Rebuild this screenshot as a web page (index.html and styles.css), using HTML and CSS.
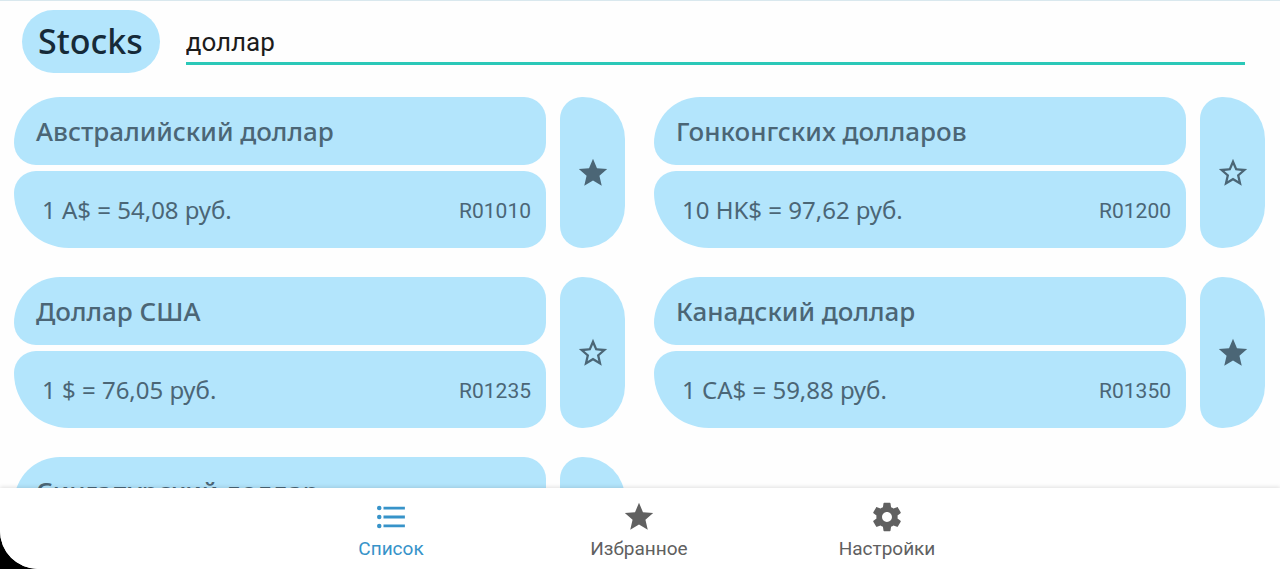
FILE: index.html
```html
<!DOCTYPE html>
<html lang="ru">
<head>
<meta charset="utf-8">
<meta name="viewport" content="width=device-width, initial-scale=1">
<title>Stocks</title>
<link rel="stylesheet" href="styles.css">
</head>
<body>
<svg class="sprite" aria-hidden="true">
  <symbol id="star" viewBox="0 0 24 24"><path d="M12 17.27L18.18 21l-1.64-7.03L22 9.24l-7.19-.61L12 2 9.19 8.63 2 9.24l5.46 4.73L5.82 21z"/></symbol>
  <symbol id="star-outline" viewBox="0 0 24 24"><path d="M22 9.24l-7.19-.62L12 2 9.19 8.63 2 9.24l5.46 4.73L5.82 21 12 17.27 18.18 21l-1.63-7.03L22 9.24zM12 15.4l-3.76 2.27 1-4.28-3.32-2.88 4.38-.38L12 6.1l1.71 4.04 4.38.38-3.32 2.88 1 4.28L12 15.4z"/></symbol>
  <symbol id="list" viewBox="0 0 24 24"><circle cx="3.7" cy="5.7" r="1.6"/><circle cx="3.7" cy="12" r="1.6"/><circle cx="3.7" cy="18.3" r="1.6"/><path d="M6.7 4.7H21.8V6.7H6.7zM6.7 11H21.8V13H6.7zM6.7 17.3H21.8V19.3H6.7z"/></symbol>
  <symbol id="gear" viewBox="0 0 24 24"><path d="M19.43 12.98c.04-.32.07-.64.07-.98s-.03-.66-.07-.98l2.11-1.65c.19-.15.24-.42.12-.64l-2-3.46c-.12-.22-.39-.3-.61-.22l-2.49 1c-.52-.4-1.08-.73-1.69-.98l-.38-2.65C14.46 2.18 14.25 2 14 2h-4c-.25 0-.46.18-.49.42l-.38 2.65c-.61.25-1.17.59-1.69.98l-2.49-1c-.23-.09-.49 0-.61.22l-2 3.46c-.13.22-.07.49.12.64l2.11 1.65c-.04.32-.07.65-.07.98s.03.66.07.98l-2.11 1.65c-.19.15-.24.42-.12.64l2 3.46c.12.22.39.3.61.22l2.49-1c.52.4 1.08.73 1.69.98l.38 2.65c.03.24.24.42.49.42h4c.25 0 .46-.18.49-.42l.38-2.65c.61-.25 1.17-.59 1.69-.98l2.49 1c.23.09.49 0 .61-.22l2-3.46c.12-.22.07-.49-.12-.64l-2.11-1.65zM12 15.5c-1.93 0-3.5-1.57-3.5-3.5s1.57-3.5 3.5-3.5 3.5 1.57 3.5 3.5-1.57 3.5-3.5 3.5z"/></symbol>
</svg>
<div class="app">
  <header class="header">
    <h1 class="brand">Stocks</h1>
    <input class="search" type="text" value="доллар" aria-label="Поиск">
  </header>
  <main class="list">
    <article class="stock">
      <h2 class="name">Австралийский доллар</h2>
      <div class="details"><span class="rate">1 A$ = 54,08 руб.</span><span class="code">R01010</span></div>
      <button class="favorite" type="button" aria-label="Убрать из избранного"><svg class="icon"><use href="#star"/></svg></button>
    </article>
    <article class="stock">
      <h2 class="name">Гонконгских долларов</h2>
      <div class="details"><span class="rate">10 HK$ = 97,62 руб.</span><span class="code">R01200</span></div>
      <button class="favorite" type="button" aria-label="Добавить в избранное"><svg class="icon"><use href="#star-outline"/></svg></button>
    </article>
    <article class="stock">
      <h2 class="name">Доллар США</h2>
      <div class="details"><span class="rate">1 $ = 76,05 руб.</span><span class="code">R01235</span></div>
      <button class="favorite" type="button" aria-label="Добавить в избранное"><svg class="icon"><use href="#star-outline"/></svg></button>
    </article>
    <article class="stock">
      <h2 class="name">Канадский доллар</h2>
      <div class="details"><span class="rate">1 CA$ = 59,88 руб.</span><span class="code">R01350</span></div>
      <button class="favorite" type="button" aria-label="Убрать из избранного"><svg class="icon"><use href="#star"/></svg></button>
    </article>
    <article class="stock">
      <h2 class="name">Сингапурский доллар</h2>
      <div class="details"></div>
      <button class="favorite" type="button" aria-label="Добавить в избранное"></button>
    </article>
  </main>
  <nav class="nav">
    <a class="tab tab-active" href="#list" aria-current="page"><svg class="icon"><use href="#list"/></svg>Список</a>
    <a class="tab" href="#favorites"><svg class="icon"><use href="#star"/></svg>Избранное</a>
    <a class="tab" href="#settings"><svg class="icon"><use href="#gear"/></svg>Настройки</a>
  </nav>
</div>
</body>
</html>
```
FILE: styles.css
```css
* { box-sizing: border-box; }

body {
  margin: 0;
  background: #000;
  font-family: Roboto, "Liberation Sans", sans-serif;
}

.sprite { display: none; }

.app {
  display: flex;
  flex-direction: column;
  height: 100vh;
  overflow: hidden;
  background: #fefefe;
  border-top: 1px solid #d9e8ee;
  border-bottom-left-radius: 38px;
}

.header {
  display: flex;
  flex: none;
  align-items: center;
  gap: 26px;
  padding: 9px 35px 0 22px;
}

.brand {
  margin: 0;
  padding: 0 17px 0 16px;
  border-radius: 32px;
  background: #b3e5fc;
  color: #162a38;
  font: 500 34px/63px "Noto Sans", sans-serif;
}

.search {
  flex: 1;
  min-width: 0;
  height: 44px;
  margin-top: 2px;
  padding: 2px 0 0;
  border: 0;
  border-bottom: 3px solid #2bc8b8;
  outline: 0;
  background: transparent;
  color: #1c1c1c;
  font: 400 26px/38px Roboto, sans-serif;
}

.list {
  display: grid;
  flex: 1;
  grid-template-columns: 1fr 1fr;
  align-content: start;
  gap: 29px;
  min-height: 0;
  padding: 24px 15px 0 14px;
  overflow: hidden;
}

.stock {
  display: grid;
  grid-template-columns: 1fr 65px;
  grid-template-rows: 68px 77px;
  column-gap: 14px;
  row-gap: 6px;
  color: #4b6676;
}

.name, .details, .favorite { background: #b3e5fc; }

.name {
  margin: 0;
  padding: 0 22px;
  border-radius: 46px 22px 22px 22px;
  font: 500 26px/68px "Noto Sans", sans-serif;
}

.details {
  display: flex;
  grid-row: 2;
  align-items: center;
  justify-content: space-between;
  padding: 0 15px 0 28px;
  border-radius: 22px 22px 22px 55px;
}

.rate { font: 400 24px/32px "Noto Sans", sans-serif; }

.code {
  padding-top: 3px;
  font-size: 21px;
  line-height: 24px;
}

.favorite {
  display: flex;
  grid-row: 1 / 3;
  grid-column: 2;
  align-items: center;
  justify-content: center;
  padding: 0;
  border: 0;
  border-radius: 22px 42px 42px 22px;
  color: #4b6676;
}

.icon {
  width: 34px;
  height: 34px;
  fill: currentColor;
}

.nav {
  display: flex;
  flex: none;
  justify-content: center;
  height: 81px;
  padding-right: 2px;
  background: #fff;
  box-shadow: 0 -1px 4px rgba(0, 0, 0, 0.12);
}

.tab {
  display: flex;
  flex: 0 1 248px;
  flex-direction: column;
  align-items: center;
  gap: 3px;
  padding-top: 12px;
  color: #606060;
  font-size: 19px;
  line-height: 24px;
  text-decoration: none;
}

.tab-active { color: #3793c9; }
```
